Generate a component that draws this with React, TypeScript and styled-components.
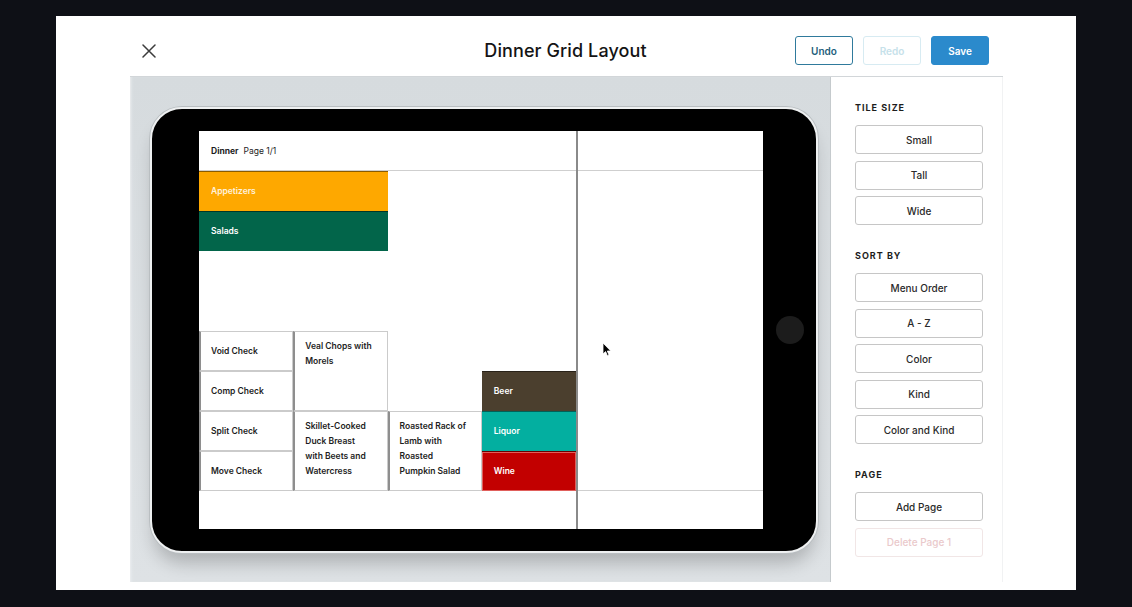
import React from "react";
import styled, { createGlobalStyle } from "styled-components";

const GlobalStyle = createGlobalStyle`
  html, body { margin: 0; padding: 0; background: #0e1016; }
  body { font-family: Inter, "Noto Sans", Arial, sans-serif; -webkit-font-smoothing: antialiased; }
  * { box-sizing: border-box; }
`;

const Page = styled.div`
  width: 1132px;
  height: 607px;
  padding: 16px 56px 17px;
  background: #0e1016;
`;

const Modal = styled.div`
  height: 574px;
  background: #fff;
  display: flex;
  flex-direction: column;
  padding: 0 73px 8px 74px;
`;

const Header = styled.header`
  height: 61px;
  flex: none;
  display: grid;
  grid-template-columns: 1fr auto 1fr;
  align-items: center;
  border-bottom: 1px solid #d2d6d9;
  padding: 9px 14px 0 12px;
`;

const CloseButton = styled.button`
  justify-self: start;
  width: 14px;
  height: 14px;
  padding: 0;
  border: 0;
  background: none;
  display: flex;
  cursor: pointer;
`;

const Title = styled.h1`
  margin: 0;
  font-size: 18px;
  font-weight: 500;
  color: #141414;
  letter-spacing: 0.1px;
`;

const Actions = styled.div`
  justify-self: end;
  display: flex;
  gap: 10px;
`;

const HeadButton = styled.button<{ $kind: "outline" | "disabled" | "primary" }>`
  width: 58px;
  height: 29px;
  border-radius: 3px;
  font-family: inherit;
  font-size: 10px;
  font-weight: 600;
  cursor: pointer;
  border: 1px solid
    ${(p) => (p.$kind === "outline" ? "#2f7a9c" : p.$kind === "disabled" ? "#d7ebf2" : "#2b8acc")};
  background: ${(p) => (p.$kind === "primary" ? "#2b8acc" : "#fff")};
  color: ${(p) => (p.$kind === "outline" ? "#1f5f7c" : p.$kind === "disabled" ? "#c6e1ea" : "#fff")};
`;

const Body = styled.div`
  flex: 1;
  display: flex;
  min-height: 0;
`;

const Canvas = styled.div`
  width: 700px;
  padding: 30px 0 0 20px;
  background: linear-gradient(#d6dbde, #dee2e5);
  box-shadow: inset 3px 0 3px -2px #eef0f2;
`;

const Tablet = styled.div`
  width: 668px;
  height: 446px;
  background: #000;
  border-radius: 32px;
  border: 2px solid #eef0f1;
  box-shadow: 0 0 0 1px #b9bec1, 0 14px 18px -4px rgba(0, 0, 0, 0.22);
  display: flex;
  padding: 22px 0 22px 47px;
`;

const Screen = styled.div`
  width: 564px;
  height: 398px;
  background: #fff;
  display: flex;
  position: relative;
`;

const Bezel = styled.div`
  flex: 1;
  display: flex;
  align-items: center;
  justify-content: center;
`;

const HomeButton = styled.div`
  width: 28px;
  height: 28px;
  border-radius: 50%;
  background: #1c1c1c;
`;

const LeftPane = styled.div`
  width: 379px;
  border-right: 2px solid #8a8a8a;
  display: flex;
  flex-direction: column;
`;

const RightPane = styled.div`
  flex: 1;
  display: flex;
  flex-direction: column;
`;

const ScreenHeader = styled.div`
  height: 40px;
  flex: none;
  border-bottom: 1px solid #cfcfcf;
  display: flex;
  align-items: center;
  gap: 5px;
  padding-left: 12px;
  font-size: 8.5px;
  color: #1d1d1d;
`;

const PageName = styled.span`
  font-weight: 700;
`;

const RightMiddle = styled.div`
  height: 320px;
  flex: none;
  border-bottom: 1px solid #cfcfcf;
`;

const Grid = styled.div`
  height: 320px;
  flex: none;
  display: grid;
  grid-template-columns: repeat(4, 1fr);
  grid-template-rows: repeat(8, 40px);
`;

const Tile = styled.div<{ $c: number; $r: number; $w?: number; $h?: number; $bg?: string; $tall?: boolean; $inset?: string }>`
  grid-column: ${(p) => p.$c} / span ${(p) => p.$w ?? 1};
  grid-row: ${(p) => p.$r} / span ${(p) => p.$h ?? 1};
  display: flex;
  align-items: ${(p) => (p.$tall ? "flex-start" : "center")};
  padding: ${(p) => (p.$tall ? "7px 6px 0 10px" : "0 6px 0 10px")};
  padding-left: ${(p) => (p.$bg ? "12px" : "10px")};
  font-size: 8.5px;
  line-height: 15px;
  font-weight: 600;
  white-space: nowrap;
  background: ${(p) => p.$bg ?? "#fff"};
  color: ${(p) => (p.$bg ? "#fff" : "#1d1d1d")};
  border: ${(p) => (p.$bg ? "0" : "1px solid #cbcbcb")};
  border-top: 1px solid ${(p) => (p.$bg ? "rgba(0,0,0,0.45)" : "#cbcbcb")};
  border-left: ${(p) => (p.$bg ? "0" : "2px solid #8e8e8e")};
  box-shadow: ${(p) => (p.$inset ? `inset 0 0 0 1px ${p.$inset}` : "none")};
`;

const TileText = styled.span<{ $faded?: boolean }>`
  opacity: ${(p) => (p.$faded ? 0.85 : 1)};
`;

const Cursor = styled.svg`
  position: absolute;
  left: 403px;
  top: 211px;
`;

const Panel = styled.aside`
  width: 173px;
  border-left: 1px solid #c5cacd;
  border-right: 1px solid #f1f2f3;
  padding: 25px 18px 0 24px;
`;

const Section = styled.section`
  margin-bottom: 25px;
`;

const SectionTitle = styled.h2`
  margin: 0 0 11px;
  font-size: 9px;
  line-height: 12px;
  font-weight: 700;
  letter-spacing: 1px;
  color: #1d1d1d;
`;

const ButtonList = styled.div`
  display: flex;
  flex-direction: column;
  gap: 6.5px;
`;

const PanelButton = styled.button<{ $disabled?: boolean }>`
  width: 128px;
  height: 29px;
  border-radius: 3px;
  background: #fff;
  border: 1px solid ${(p) => (p.$disabled ? "#f1e6e6" : "#c6c6c6")};
  font-family: inherit;
  font-size: 10px;
  font-weight: 500;
  color: ${(p) => (p.$disabled ? "#eac9cb" : "#2a2a2a")};
  cursor: pointer;
`;

type TileDef = {
  text: string[];
  c: number;
  r: number;
  w?: number;
  h?: number;
  bg?: string;
  inset?: string;
  faded?: boolean;
};

const tiles: TileDef[] = [
  { text: ["Appetizers"], c: 1, r: 1, w: 2, bg: "#fea800", faded: true },
  { text: ["Salads"], c: 1, r: 2, w: 2, bg: "#02654a" },
  { text: ["Void Check"], c: 1, r: 5 },
  { text: ["Comp Check"], c: 1, r: 6 },
  { text: ["Split Check"], c: 1, r: 7 },
  { text: ["Move Check"], c: 1, r: 8 },
  { text: ["Veal Chops with", "Morels"], c: 2, r: 5, h: 2 },
  { text: ["Skillet-Cooked", "Duck Breast", "with Beets and", "Watercress"], c: 2, r: 7, h: 2 },
  { text: ["Roasted Rack of", "Lamb with", "Roasted", "Pumpkin Salad"], c: 3, r: 7, h: 2 },
  { text: ["Beer"], c: 4, r: 6, bg: "#4b3f2e" },
  { text: ["Liquor"], c: 4, r: 7, bg: "#03afa0" },
  { text: ["Wine"], c: 4, r: 8, bg: "#c20000", inset: "#e0605c" },
];

const sections: { title: string; buttons: { label: string; disabled?: boolean }[] }[] = [
  { title: "TILE SIZE", buttons: [{ label: "Small" }, { label: "Tall" }, { label: "Wide" }] },
  {
    title: "SORT BY",
    buttons: [
      { label: "Menu Order" },
      { label: "A - Z" },
      { label: "Color" },
      { label: "Kind" },
      { label: "Color and Kind" },
    ],
  },
  { title: "PAGE", buttons: [{ label: "Add Page" }, { label: "Delete Page 1", disabled: true }] },
];

export default function App() {
  return (
    <Page>
      <GlobalStyle />
      <Modal>
        <Header>
          <CloseButton aria-label="Close">
            <svg width="14" height="14" viewBox="0 0 14 14">
              <path d="M1 1 L13 13 M13 1 L1 13" stroke="#3c3c3c" strokeWidth="1.5" strokeLinecap="round" />
            </svg>
          </CloseButton>
          <Title>Dinner Grid Layout</Title>
          <Actions>
            <HeadButton $kind="outline">Undo</HeadButton>
            <HeadButton $kind="disabled">Redo</HeadButton>
            <HeadButton $kind="primary">Save</HeadButton>
          </Actions>
        </Header>
        <Body>
          <Canvas>
            <Tablet>
              <Screen>
                <LeftPane>
                  <ScreenHeader>
                    <PageName>Dinner</PageName>
                    <span>Page 1/1</span>
                  </ScreenHeader>
                  <Grid>
                    {tiles.map((t) => (
                      <Tile
                        key={t.text.join(" ")}
                        $c={t.c}
                        $r={t.r}
                        $w={t.w}
                        $h={t.h}
                        $bg={t.bg}
                        $inset={t.inset}
                        $tall={(t.h ?? 1) > 1}
                      >
                        <TileText $faded={t.faded}>
                          {t.text.map((line, i) => (
                            <React.Fragment key={i}>
                              {i > 0 && <br />}
                              {line}
                            </React.Fragment>
                          ))}
                        </TileText>
                      </Tile>
                    ))}
                  </Grid>
                </LeftPane>
                <RightPane>
                  <ScreenHeader />
                  <RightMiddle />
                </RightPane>
                <Cursor width="10" height="15" viewBox="0 0 10 15">
                  <path d="M1 1 L1 12 L3.6 9.6 L5.4 13.8 L7 13.1 L5.3 9 L8.8 9 Z" fill="#000" stroke="#fff" strokeWidth="0.8" />
                </Cursor>
              </Screen>
              <Bezel>
                <HomeButton />
              </Bezel>
            </Tablet>
          </Canvas>
          <Panel>
            {sections.map((s) => (
              <Section key={s.title}>
                <SectionTitle>{s.title}</SectionTitle>
                <ButtonList>
                  {s.buttons.map((b) => (
                    <PanelButton key={b.label} $disabled={b.disabled}>
                      {b.label}
                    </PanelButton>
                  ))}
                </ButtonList>
              </Section>
            ))}
          </Panel>
        </Body>
      </Modal>
    </Page>
  );
}
